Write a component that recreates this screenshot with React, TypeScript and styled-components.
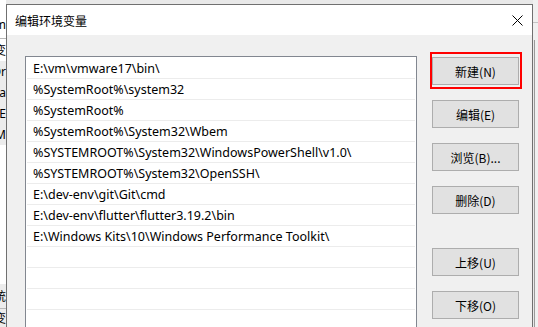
import React from "react";
import styled, { createGlobalStyle } from "styled-components";

const paths: string[] = [
  "E:\\vm\\vmware17\\bin\\",
  "%SystemRoot%\\system32",
  "%SystemRoot%",
  "%SystemRoot%\\System32\\Wbem",
  "%SYSTEMROOT%\\System32\\WindowsPowerShell\\v1.0\\",
  "%SYSTEMROOT%\\System32\\OpenSSH\\",
  "E:\\dev-env\\git\\Git\\cmd",
  "E:\\dev-env\\flutter\\flutter3.19.2\\bin",
  "E:\\Windows Kits\\10\\Windows Performance Toolkit\\",
];

const buttons = [
  { text: "新建(N)", highlight: true },
  { text: "编辑(E)" },
  { text: "浏览(B)..." },
  { text: "删除(D)" },
  { text: "上移(U)", spaced: true },
  { text: "下移(O)" },
];

// fragments of the window behind the dialog
const backRows = [
  { text: "", h: 14 },
  { text: "m", h: 20 },
  { text: "", h: 4, line: true },
  { text: "变", h: 22 },
  { text: "Or", h: 21, gray: true },
  { text: "Pa", h: 21, gray: true },
  { text: "TE", h: 21, gray: true },
  { text: "TM", h: 21, gray: true },
];

const GlobalStyle = createGlobalStyle`
  html, body {
    margin: 0;
    padding: 0;
    background: #e9e9e9;
    overflow: hidden;
  }
  body {
    font-family: "Noto Sans", "Noto Sans CJK SC", sans-serif;
  }
`;

const SPage = styled.div`
  display: flex;
  width: 538px;
  height: 327px;
  overflow: hidden;
  background: #e9e9e9;
`;

const SBackStrip = styled.div`
  width: 6px;
  flex-shrink: 0;
  overflow: hidden;
  display: flex;
  flex-direction: column;
  background: #fff;
  .spacer {
    flex: 1;
  }
`;

const SBackRow = styled.div<{ $h: number; $gray?: boolean; $line?: boolean }>`
  height: ${(p) => p.$h}px;
  flex-shrink: 0;
  display: flex;
  justify-content: flex-end;
  align-items: center;
  white-space: nowrap;
  font-size: 12px;
  color: #000;
  background: ${(p) => (p.$gray ? "#ececec" : "#fff")};
  border-bottom: ${(p) => (p.$line ? "1px solid #b9b9b9" : "none")};
  font-family: "Noto Sans", "Noto Sans CJK SC", sans-serif;
`;

const SDialog = styled.div`
  margin-top: 4px;
  width: 527px;
  flex-shrink: 0;
  height: 340px;
  box-sizing: border-box;
  border: 1px solid #707070;
  background: #f0f0f0;
  display: flex;
  flex-direction: column;
`;

const STitleBar = styled.div`
  height: 30px;
  flex-shrink: 0;
  background: #fff;
  display: flex;
  align-items: center;
  justify-content: space-between;
  padding: 0 9px 0 8px;
  .title {
    font-family: "Noto Sans CJK SC", sans-serif;
    font-size: 12px;
    color: #000;
  }
  svg {
    display: block;
  }
`;

const SBody = styled.div`
  display: flex;
  align-items: flex-start;
  gap: 15px;
  padding: 21px 13px 0 18px;
`;

const SListBox = styled.div`
  width: 392px;
  height: 300px;
  box-sizing: border-box;
  border: 1px solid #828790;
  background: #fff;
  padding: 1px;
  overflow: hidden;
`;

const SRow = styled.div`
  height: 20px;
  border-bottom: 1px solid #ececec;
  padding-left: 6px;
  display: flex;
  align-items: center;
  white-space: nowrap;
  font-family: "Noto Sans", "Noto Sans CJK SC", sans-serif;
  font-size: 12.5px;
  color: #000;
`;

const SButtonColumn = styled.div`
  display: flex;
  flex-direction: column;
  gap: 15px;
  padding-top: 1px;
`;

const SButton = styled.button<{ $highlight?: boolean; $spaced?: boolean }>`
  position: relative;
  width: 87px;
  height: 28px;
  box-sizing: border-box;
  margin: ${(p) => (p.$spaced ? "19px 0 0" : "0")};
  padding: 0;
  border: 1px solid #adadad;
  background: #e1e1e1;
  font-family: "Noto Sans CJK SC", sans-serif;
  font-size: 12px;
  color: #000;
  &::after {
    content: "";
    display: ${(p) => (p.$highlight ? "block" : "none")};
    position: absolute;
    top: -6px;
    left: -3px;
    right: -4px;
    bottom: -5px;
    border: 2px solid #ff0000;
  }
`;

const SRightStrip = styled.div`
  flex: 1;
  display: flex;
  flex-direction: column;
  .top {
    height: 22px;
    border-bottom: 1px solid #c4c4c4;
    background: #f0f0f0;
  }
  .gap {
    height: 17px;
    background: #f0f0f0;
  }
  .rest {
    flex: 1;
    margin-left: 1px;
    border-left: 1px solid #9a9a9a;
    background: #f0f0f0;
  }
`;

function CloseIcon() {
  return (
    <svg width="11" height="11" viewBox="0 0 11 11">
      <path d="M0.5 0.5 L10.5 10.5 M10.5 0.5 L0.5 10.5" stroke="#000" strokeWidth="1" />
    </svg>
  );
}

export default function App() {
  const emptyRows = 6;
  return (
    <>
      <GlobalStyle />
      <SPage>
        <SBackStrip>
          {backRows.map((r, i) => (
            <SBackRow key={i} $h={r.h} $gray={r.gray} $line={r.line}>
              {r.text}
            </SBackRow>
          ))}
          <div className="spacer" />
          <SBackRow $h={24} $gray $line>
            统
          </SBackRow>
          <SBackRow $h={18} $gray>
            变
          </SBackRow>
        </SBackStrip>

        <SDialog>
          <STitleBar>
            <span className="title">编辑环境变量</span>
            <CloseIcon />
          </STitleBar>
          <SBody>
            <SListBox>
              {paths.map((p) => (
                <SRow key={p}>{p}</SRow>
              ))}
              {Array.from({ length: emptyRows }).map((_, i) => (
                <SRow key={"empty" + i} />
              ))}
            </SListBox>
            <SButtonColumn>
              {buttons.map((b) => (
                <SButton key={b.text} $highlight={b.highlight} $spaced={b.spaced}>
                  {b.text}
                </SButton>
              ))}
            </SButtonColumn>
          </SBody>
        </SDialog>

        <SRightStrip>
          <div className="top" />
          <div className="gap" />
          <div className="rest" />
        </SRightStrip>
      </SPage>
    </>
  );
}
